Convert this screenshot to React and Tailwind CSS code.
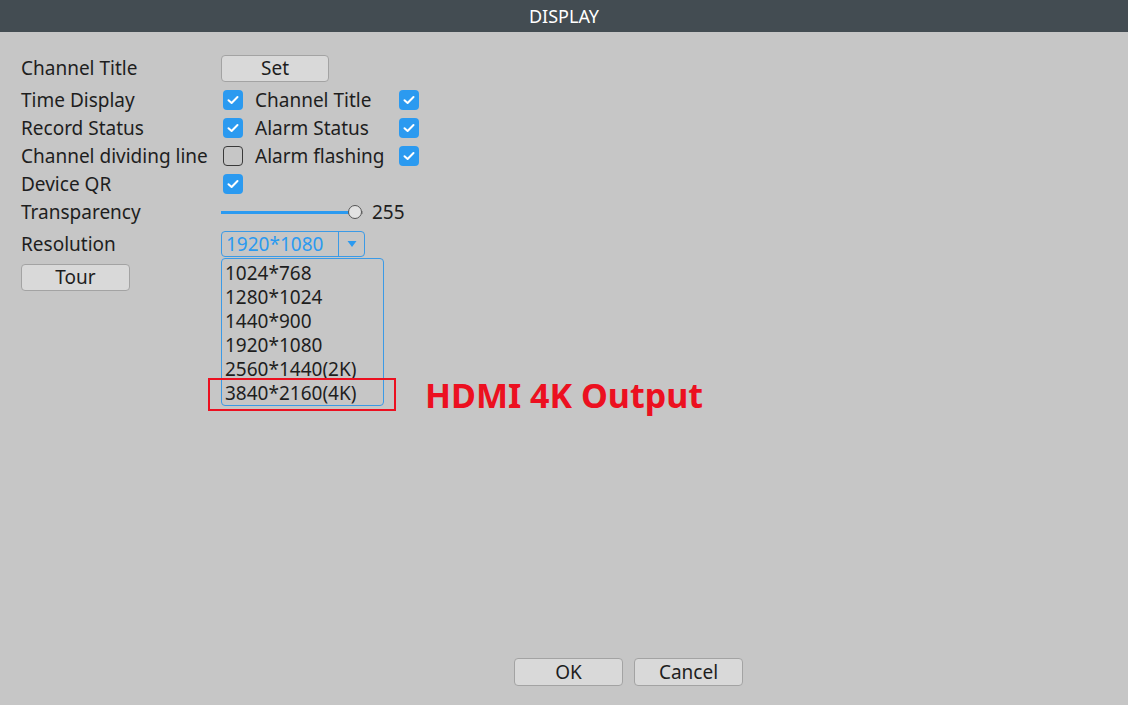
import React from "react";

const font = { fontFamily: '"Noto Sans", "Open Sans", sans-serif' };

function Check({ on }) {
  if (on) {
    return (
      <div className="w-[20px] h-[20px] rounded-[4px] bg-[#2b9af0] flex items-center justify-center">
        <svg width="12" height="10" viewBox="0 0 12 10">
          <path d="M1.5 5.2 L4.6 8 L10.5 2" fill="none" stroke="white" strokeWidth="2" strokeLinecap="round" strokeLinejoin="round" />
        </svg>
      </div>
    );
  }
  return <div className="w-[20px] h-[20px] rounded-[4px] border-[1.5px] border-[#3a3a3a] bg-transparent" />;
}

function Btn({ children, className = "" }) {
  return (
    <div className={"flex items-center justify-center rounded-[4px] border border-[#a3a3a3] bg-[#d9d9d9] text-[19px] text-[#1e1e1e] " + className}>
      {children}
    </div>
  );
}

export default function App() {
  const opts = ["1024*768", "1280*1024", "1440*900", "1920*1080", "2560*1440(2K)", "3840*2160(4K)"];
  return (
    <div className="w-[1128px] h-[705px] bg-[#c6c6c6] flex flex-col relative overflow-hidden" style={font}>
      <div className="h-[32px] bg-[#434c52] flex items-center justify-center text-white text-[18px]">DISPLAY</div>
      <div className="flex-1 flex flex-col pl-[21px] pt-[18px] text-[19px] text-[#1e1e1e]">
        <div className="h-[36px] flex items-center">
          <div className="w-[200px]">Channel Title</div>
          <Btn className="w-[108px] h-[27px]">Set</Btn>
        </div>
        <div className="h-[28px] flex items-center">
          <div className="w-[202px]">Time Display</div>
          <Check on />
          <div className="w-[144px] ml-[12px]">Channel Title</div>
          <Check on />
        </div>
        <div className="h-[28px] flex items-center">
          <div className="w-[202px]">Record Status</div>
          <Check on />
          <div className="w-[144px] ml-[12px]">Alarm Status</div>
          <Check on />
        </div>
        <div className="h-[28px] flex items-center">
          <div className="w-[202px] whitespace-nowrap">Channel dividing line</div>
          <Check />
          <div className="w-[144px] ml-[12px] whitespace-nowrap">Alarm flashing</div>
          <Check on />
        </div>
        <div className="h-[28px] flex items-center">
          <div className="w-[202px]">Device QR</div>
          <Check on />
        </div>
        <div className="h-[28px] flex items-center">
          <div className="w-[200px]">Transparency</div>
          <div className="relative w-[142px] h-[14px] flex items-center">
            <div className="h-[3px] w-[128px] bg-[#2b9af0]" />
            <div className="h-[3px] flex-1 bg-[#9a9a9a]" />
            <div className="absolute left-[127px] top-0 w-[14px] h-[14px] rounded-full border border-[#555] bg-[#e2e2e2]" />
          </div>
          <div className="ml-[9px]">255</div>
        </div>
        <div className="h-[36px] flex items-center">
          <div className="w-[200px]">Resolution</div>
          <div className="relative">
            <div className="w-[144px] h-[26px] rounded-[4px] border border-[#3b9ae6] flex">
              <div className="w-[117px] border-r border-[#3b9ae6] text-[#2b9af0] pl-[4px] flex items-center leading-none">1920*1080</div>
              <div className="flex-1 flex items-center justify-center">
                <svg width="10" height="8" viewBox="0 0 10 8"><path d="M0.5 1 L9.5 1 L5 7 Z" fill="#2b9af0" /></svg>
              </div>
            </div>
            <div className="absolute left-0 top-[27px] w-[163px] h-[148px] rounded-[4px] border border-[#3b9ae6] pt-[2px] pl-[3px] z-10">
              {opts.map((o) => (
                <div key={o} className="h-[24px] flex items-center leading-none whitespace-nowrap">{o}</div>
              ))}
            </div>
          </div>
        </div>
        <div className="mt-[2px]">
          <Btn className="w-[109px] h-[27px]">Tour</Btn>
        </div>
        <div className="flex-1" />
        <div className="flex gap-[11px] pl-[493px] mb-[19px]">
          <Btn className="w-[109px] h-[28px]">OK</Btn>
          <Btn className="w-[109px] h-[28px]">Cancel</Btn>
        </div>
      </div>
      <div className="absolute left-[208px] top-[378px] w-[188px] h-[33px] border-[2.5px] border-[#ec1020] z-20" />
      <div className="absolute left-[425px] top-[372px] text-[#ec1020] font-bold text-[34px] leading-[46px] whitespace-nowrap">HDMI 4K Output</div>
    </div>
  );
}
